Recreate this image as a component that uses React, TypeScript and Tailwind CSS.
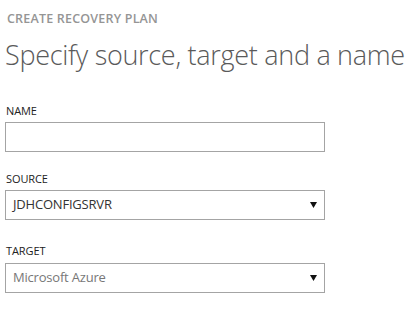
import * as React from 'react';

const Caret = () => (
  <svg width="7" height="6" viewBox="0 0 7 6" className="shrink-0">
    <path d="M0 0H7L3.5 6Z" fill="#111" />
  </svg>
);

function Label({ text }: { text: string }) {
  return (
    <div className="pl-[1px] text-[11px] font-medium text-[#222] leading-[14px] tracking-[-0.1px]">{text}</div>
  );
}

export default function App() {
  return (
    <div className="w-[416px] h-[312px] bg-white pl-[5px] pt-[11px] font-['Open_Sans',sans-serif] overflow-hidden">
      <div className="pl-[2px] text-[12.5px] font-semibold text-[#959595] leading-[16px] tracking-[0.2px]">
        CREATE RECOVERY PLAN
      </div>
      <h1 className="mt-[10px] text-[27px] font-light text-[#5a5a5a] leading-[36px] tracking-[-0.3px]">
        Specify source, target and a name
      </h1>

      <div className="mt-[31px] flex flex-col">
        <Label text="NAME" />
        <input className="mt-[4px] w-[320px] h-[30px] border border-[#a4a4a4] bg-white outline-none" />

        <div className="mt-[20px]">
          <Label text="SOURCE" />
        </div>
        <div className="mt-[4px] w-[320px] h-[30px] border border-[#a4a4a4] flex items-center justify-between pl-[7px] pr-[7px]">
          <span className="text-[13px] text-[#333] tracking-[-0.2px]">JDHCONFIGSRVR</span>
          <Caret />
        </div>

        <div className="mt-[24px]">
          <Label text="TARGET" />
        </div>
        <div className="mt-[5px] w-[320px] h-[30px] border border-[#a4a4a4] flex items-center justify-between pl-[7px] pr-[7px]">
          <span className="text-[13px] text-[#777] tracking-[-0.2px]">Microsoft Azure</span>
          <Caret />
        </div>
      </div>
    </div>
  );
}
